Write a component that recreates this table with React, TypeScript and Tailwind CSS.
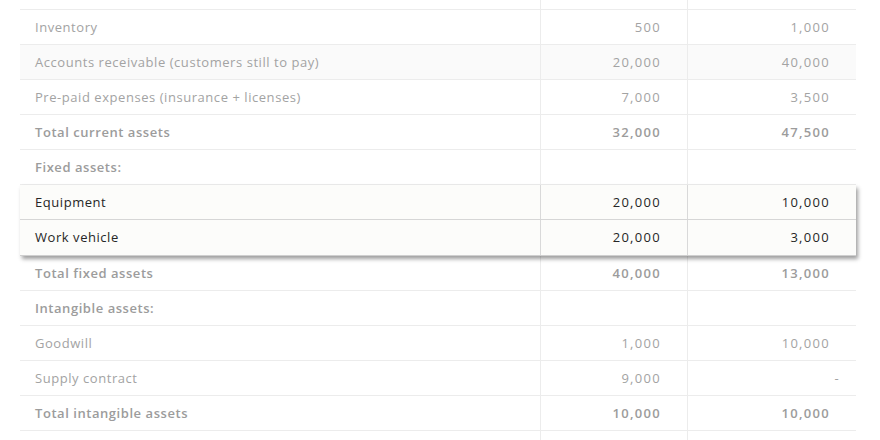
import React from "react";

type Row = { label: string; a: string; b: string; kind?: "bold" | "hl" | "stripe" };

const rows: Row[] = [
  { label: "Inventory", a: "500", b: "1,000" },
  { label: "Accounts receivable (customers still to pay)", a: "20,000", b: "40,000", kind: "stripe" },
  { label: "Pre-paid expenses (insurance + licenses)", a: "7,000", b: "3,500" },
  { label: "Total current assets", a: "32,000", b: "47,500", kind: "bold" },
  { label: "Fixed assets:", a: "", b: "", kind: "bold" },
];
const hlRows: Row[] = [
  { label: "Equipment", a: "20,000", b: "10,000" },
  { label: "Work vehicle", a: "20,000", b: "3,000" },
];
const rows2: Row[] = [
  { label: "Total fixed assets", a: "40,000", b: "13,000", kind: "bold" },
  { label: "Intangible assets:", a: "", b: "", kind: "bold" },
  { label: "Goodwill", a: "1,000", b: "10,000" },
  { label: "Supply contract", a: "9,000", b: "-" },
  { label: "Total intangible assets", a: "10,000", b: "10,000", kind: "bold" },
];

function TRow({ r }: { r: Row }) {
  const bold = r.kind === "bold";
  const bg = r.kind === "stripe" ? "bg-[#fafafa]" : "bg-white";
  const txt = bold ? "font-semibold text-[#9c9c9c]" : "text-[#a3a3a3]";
  return (
    <div className={`flex h-[35px] border-b border-[#ececec] ${bg} ${txt}`}>
      <div className="w-[520px] flex items-center pl-[15px] pt-[1px] tracking-[0.55px]">{r.label}</div>
      <div className="w-[147px] flex items-center justify-end pr-[26px] pt-[1px] border-l border-[#ececec] tracking-[1.3px]">{r.a}</div>
      <div className={`flex-1 flex items-center justify-end pt-[1px] border-l border-[#ececec] tracking-[1.3px] ${r.b === "-" ? "pr-[16px]" : "pr-[26px]"}`}>{r.b}</div>
    </div>
  );
}

function HRow({ r, last }: { r: Row; last?: boolean }) {
  return (
    <div className={`flex h-[35px] text-[#262626] ${last ? "" : "border-b border-[#d6d6d6]"}`}>
      <div className="w-[520px] flex items-center pl-[15px] pt-[1px] tracking-[0.55px]">{r.label}</div>
      <div className="w-[147px] flex items-center justify-end pr-[26px] pt-[1px] border-l border-[#d9d9d9] tracking-[1.3px]">{r.a}</div>
      <div className="flex-1 flex items-center justify-end pr-[26px] pt-[1px] border-l border-[#d9d9d9] tracking-[1.3px]">{r.b}</div>
    </div>
  );
}

export default function App() {
  return (
    <div className="w-[880px] h-[440px] bg-white overflow-hidden" style={{ fontFamily: '"Open Sans", "Noto Sans", sans-serif' }}>
      <div className="mx-[20px] w-[836px] text-[13px]">
        <div className="flex h-[10px] border-b border-[#ececec]">
          <div className="w-[520px]" />
          <div className="w-[147px] border-l border-[#ececec]" />
          <div className="flex-1 border-l border-[#ececec]" />
        </div>
        {rows.map((r) => (
          <TRow key={r.label} r={r} />
        ))}
        <div className="relative z-10 bg-[#fcfcfa] border-b border-[#cfcfcf] shadow-[2px_3px_4px_rgba(0,0,0,0.38)]">
          <HRow r={hlRows[0]} />
          <HRow r={hlRows[1]} last />
        </div>
        {rows2.map((r) => (
          <TRow key={r.label} r={r} />
        ))}
        <div className="flex h-[20px]">
          <div className="w-[520px]" />
          <div className="w-[147px] border-l border-[#ececec]" />
          <div className="flex-1 border-l border-[#ececec]" />
        </div>
      </div>
    </div>
  );
}
